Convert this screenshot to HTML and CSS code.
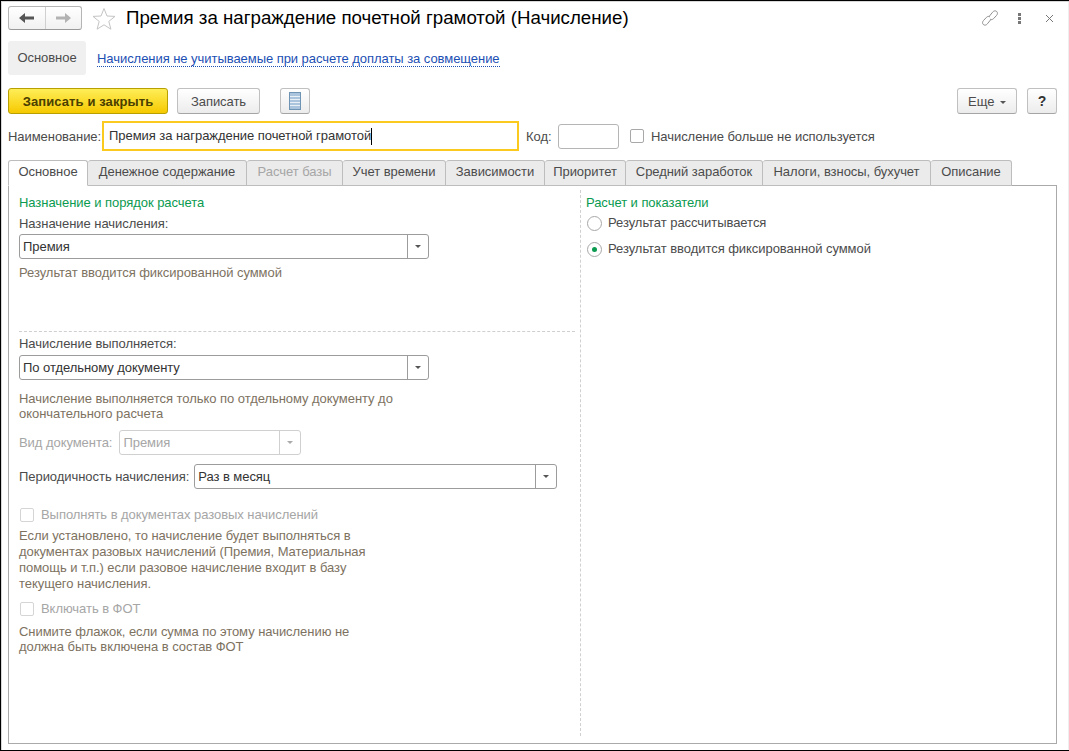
FILE: index.html
```html
<!DOCTYPE html>
<html lang="ru">
<head>
    <meta charset="UTF-8">
    <title>Премия за награждение почетной грамотой (Начисление)</title>
    <link rel="stylesheet" href="styles.css">
</head>
<body>
<div class="window">
    <!-- Заголовок формы -->
    <div class="title-bar">
        <div class="nav-group">
            <button class="nav-btn">
                <svg width="16" height="12" viewBox="0 0 16 12"><path d="M0 6 L6 1 V4.5 H15 V7.5 H6 V11 Z" fill="#555"/></svg>
            </button>
            <button class="nav-btn">
                <svg width="16" height="12" viewBox="0 0 16 12"><path d="M16 6 L10 1 V4.5 H1 V7.5 H10 V11 Z" fill="#b3b3b3"/></svg>
            </button>
        </div>
        <svg class="star" width="24" height="24" viewBox="0 0 24 24"><path d="M12 1.5 L15 9 L23 9.4 L16.8 14.4 L18.9 22.2 L12 17.8 L5.1 22.2 L7.2 14.4 L1 9.4 L9 9 Z" fill="none" stroke="#c4c4c4"/></svg>
        <h1 class="title">Премия за награждение почетной грамотой (Начисление)</h1>
        <div class="title-tools">
            <svg width="18" height="18" viewBox="0 0 18 18"><g fill="none" stroke="#8f8f8f" stroke-width="1"><path d="M8.2 7.4 L11.6 3.2 C12.9 1.6 14.6 1.5 15.7 2.5 C16.8 3.5 16.7 5.2 15.4 6.6 L12.6 9.6 C11.4 10.8 10 10.9 9 10"/><path d="M9.8 10.6 L6.4 14.8 C5.1 16.4 3.4 16.5 2.3 15.5 C1.2 14.5 1.3 12.8 2.6 11.4 L5.4 8.4 C6.6 7.2 8 7.1 9 8"/></g></svg>
            <span class="dots"><i></i><i></i><i></i></span>
            <svg width="9" height="9" viewBox="0 0 9 9"><path d="M1 1 L8 8 M8 1 L1 8" stroke="#777" stroke-width="1"/></svg>
        </div>
    </div>

    <!-- Панель навигации формы -->
    <div class="section-nav">
        <div class="section-current">Основное</div>
        <a class="section-link" href="#">Начисления не учитываемые при расчете доплаты за совмещение</a>
    </div>

    <!-- Командная панель -->
    <div class="command-bar">
        <button class="btn btn-primary">Записать и закрыть</button>
        <button class="btn btn-save">Записать</button>
        <button class="btn btn-icon">
            <svg width="12" height="18" viewBox="0 0 12 18">
                <rect x="0.5" y="0.5" width="11" height="17" fill="#a9c4dc" stroke="#6f93b3"/>
                <path d="M1 4.5 H11 M1 7.5 H11 M1 10.5 H11 M1 13.5 H11" stroke="#e8f0f6" stroke-width="1"/>
            </svg>
        </button>
        <div class="command-right">
            <button class="btn btn-more">Еще <span class="caret"></span></button>
            <button class="btn btn-help">?</button>
        </div>
    </div>

    <!-- Реквизиты -->
    <div class="name-row">
        <span class="name-label">Наименование:</span>
        <div class="name-input">Премия за награждение почетной грамотой<span class="cursor"></span></div>
        <span class="code-label">Код:</span>
        <div class="code-input"></div>
        <span class="checkbox"></span>
        <span class="check-text">Начисление больше не используется</span>
    </div>

    <!-- Вкладки -->
    <div class="tabs">
        <div class="tab tab-active t1">Основное</div>
        <div class="tab t2">Денежное содержание</div>
        <div class="tab tab-disabled t3">Расчет базы</div>
        <div class="tab t4">Учет времени</div>
        <div class="tab t5">Зависимости</div>
        <div class="tab t6">Приоритет</div>
        <div class="tab t7">Средний заработок</div>
        <div class="tab t8">Налоги, взносы, бухучет</div>
        <div class="tab t9">Описание</div>
    </div>

    <div class="tab-panel">
        <div class="left-col">
            <div class="group-title">Назначение и порядок расчета</div>
            <div class="field-label">Назначение начисления:</div>
            <div class="select select-wide"><span class="select-value">Премия</span><span class="select-arrow"><span class="caret"></span></span></div>
            <div class="hint hint-first">Результат вводится фиксированной суммой</div>

            <div class="separator"></div>

            <div class="field-label">Начисление выполняется:</div>
            <div class="select select-wide"><span class="select-value">По отдельному документу</span><span class="select-arrow"><span class="caret"></span></span></div>
            <div class="hint hint-doc">Начисление выполняется только по отдельному документу до<br>окончательного расчета</div>

            <div class="inline-field doc-field">
                <span class="inline-label disabled-text">Вид документа:</span>
                <div class="select select-doc select-disabled"><span class="select-value">Премия</span><span class="select-arrow"><span class="caret"></span></span></div>
            </div>
            <div class="inline-field period-field">
                <span class="inline-label">Периодичность начисления:</span>
                <div class="select select-period"><span class="select-value">Раз в месяц</span><span class="select-arrow"><span class="caret"></span></span></div>
            </div>

            <div class="check-row check-once"><span class="checkbox checkbox-disabled"></span><span class="disabled-text">Выполнять в документах разовых начислений</span></div>
            <div class="hint">Если установлено, то начисление будет выполняться в<br>документах разовых начислений (Премия, Материальная<br>помощь и т.п.) если разовое начисление входит в базу<br>текущего начисления.</div>
            <div class="check-row check-fot"><span class="checkbox checkbox-disabled"></span><span class="disabled-text">Включать в ФОТ</span></div>
            <div class="hint hint-fot">Снимите флажок, если сумма по этому начислению не<br>должна быть включена в состав ФОТ</div>
        </div>

        <div class="right-col">
            <div class="group-title">Расчет и показатели</div>
            <div class="radio-row radio-first"><span class="radio"></span>Результат рассчитывается</div>
            <div class="radio-row radio-second"><span class="radio radio-on"></span>Результат вводится фиксированной суммой</div>
        </div>
    </div>
</div>
</body>
</html>
```

FILE: styles.css
```css
* {
    box-sizing: border-box;
}
html, body {
    margin: 0;
    height: 100%;
}
body {
    font-family: "Liberation Sans", Arial, sans-serif;
    font-size: 13px;
    letter-spacing: -0.05px;
    color: #4b4b4b;
    background: #000;
    overflow: hidden;
}
button {
    font-family: inherit;
    font-size: inherit;
    letter-spacing: inherit;
    color: inherit;
    padding: 0;
}
.window {
    height: 750px;
    margin: 0 0 0 1px;
    border-top: 1px solid #000;
    background: #fff;
    box-shadow: inset 1px 1px 0 #d8d8d8, inset -1px 0 0 #eee;
    padding: 0 12px 0 7px;
    display: flex;
    flex-direction: column;
}

/* заголовок */
.title-bar {
    height: 34px;
    padding-top: 5px;
    display: flex;
    align-items: flex-start;
}
.nav-group {
    width: 74px;
    height: 24px;
    display: flex;
    border: 1px solid #b5b5b5;
    border-bottom-color: #999;
    border-radius: 3px;
    background: linear-gradient(#fff, #f1f1f1);
}
.nav-btn {
    flex: 1;
    border: 0;
    background: none;
    display: flex;
    align-items: center;
    justify-content: center;
}
.nav-btn + .nav-btn {
    border-left: 1px solid #d0d0d0;
}
.star {
    margin: 1px 0 0 10px;
}
.title {
    margin: 0 0 0 10px;
    font-size: 18.7px;
    font-weight: normal;
    letter-spacing: 0;
    line-height: 24px;
    color: #000;
}
.title-tools {
    margin-left: auto;
    margin-right: 3px;
    height: 24px;
    display: flex;
    align-items: center;
    gap: 14px;
}
.dots {
    display: flex;
    flex-direction: column;
    gap: 1px;
    margin: 0 10px 0 5px;
}
.dots i {
    display: block;
    width: 3px;
    height: 3px;
    background: #777;
}

/* панель навигации */
.section-nav {
    height: 34px;
    margin-top: 6px;
    display: flex;
    align-items: center;
}
.section-current {
    width: 78px;
    height: 34px;
    line-height: 34px;
    text-align: center;
    background: #f0f0f0;
    border-radius: 3px;
}
.section-link {
    margin-left: 11px;
    margin-top: 2px;
    color: #1c4fb4;
    text-decoration: none;
    border-bottom: 1px dotted #1c4fb4;
    line-height: 15px;
}

/* командная панель */
.command-bar {
    margin-top: 13px;
    height: 27px;
    display: flex;
}
.btn {
    height: 26px;
    border: 1px solid #c0c0c0;
    border-bottom-color: #a5a5a5;
    border-radius: 3px;
    background: linear-gradient(#fff, #ececec);
}
.btn-primary {
    width: 160px;
    font-weight: bold;
    letter-spacing: 0.1px;
    color: #4a4000;
    border-color: #b8a000;
    background: linear-gradient(#ffee58, #f6c900);
}
.btn-save {
    width: 83px;
    margin-left: 9px;
}
.btn-icon {
    width: 30px;
    margin-left: 20px;
    display: flex;
    align-items: center;
    justify-content: center;
}
.command-right {
    margin-left: auto;
    display: flex;
    gap: 10px;
}
.btn-more {
    width: 60px;
}
.btn-help {
    width: 30px;
    font-weight: bold;
    font-size: 14px;
    color: #333;
}
.caret {
    display: inline-block;
    width: 0;
    height: 0;
    margin-left: 2px;
    vertical-align: middle;
    border-left: 3px solid transparent;
    border-right: 3px solid transparent;
    border-top: 3px solid #555;
}

/* реквизиты */
.name-row {
    margin-top: 6px;
    height: 30px;
    display: flex;
    align-items: center;
}
.name-label {
    width: 94px;
}
.name-input {
    width: 417px;
    height: 30px;
    line-height: 26px;
    padding-left: 5px;
    border: 2px solid #fbca1e;
    color: #333;
    display: flex;
    align-items: center;
}
.cursor {
    display: inline-block;
    width: 1px;
    height: 17px;
    background: #000;
}
.code-label {
    margin-left: 7px;
    width: 32px;
}
.code-input {
    width: 61px;
    height: 25px;
    border: 1px solid #b5b5b5;
    border-radius: 3px;
}
.checkbox {
    flex: none;
    display: inline-block;
    width: 14px;
    height: 14px;
    border: 1px solid #a8a8a8;
    border-radius: 2px;
    background: #fff;
}
.name-row .checkbox {
    margin-left: 11px;
}
.check-text {
    margin-left: 7px;
}

/* вкладки */
.tabs {
    margin-top: 9px;
    height: 26px;
    display: flex;
    position: relative;
    z-index: 1;
}
.tab {
    height: 26px;
    line-height: 22px;
    text-align: center;
    background: #ebebeb;
    border: 1px solid #bdbdbd;
    border-left: 0;
    border-radius: 3px 3px 0 0;
}
.tab-active {
    background: #fff;
    border-left: 1px solid #bdbdbd;
    border-bottom-color: #fff;
}
.tab-disabled {
    color: #a6a6a6;
}
.t1 { width: 80px; }
.t2 { width: 159px; }
.t3 { width: 96px; }
.t4 { width: 103px; }
.t5 { width: 99px; }
.t6 { width: 81px; }
.t7 { width: 137px; }
.t8 { width: 168px; }
.t9 { width: 81px; }

.tab-panel {
    margin-top: -1px;
    height: 559px;
    border: 1px solid #aaa;
    display: flex;
    padding: 4px 0 7px 10px;
}
.left-col {
    width: 561px;
    flex: none;
}
.right-col {
    flex: 1;
    border-left: 1px dashed #d0d0d0;
    padding-left: 5px;
}
.group-title {
    margin-top: 5px;
    line-height: 15px;
    color: #0a9a50;
}
.field-label {
    line-height: 15px;
    margin-top: 6px;
}
.select {
    display: flex;
    height: 25px;
    border: 1px solid #9c9c9c;
    border-radius: 3px;
    color: #333;
    background: #fff;
}
.select-wide {
    width: 410px;
    margin-top: 3px;
}
.select-value {
    flex: 1;
    line-height: 23px;
    padding-left: 3px;
}
.select-arrow {
    width: 21px;
    border-left: 1px solid #9c9c9c;
    display: flex;
    align-items: center;
    justify-content: center;
}
.select-arrow .caret {
    margin: 0;
}
.select-disabled {
    border-color: #d0d0d0;
    color: #a6a6a6;
}
.select-disabled .select-arrow {
    border-left-color: #d0d0d0;
}
.select-disabled .caret {
    border-top-color: #aaa;
}
.select-doc {
    width: 182px;
}
.select-period {
    width: 363px;
}
.hint {
    color: #7d725f;
    line-height: 16px;
}
.hint-first {
    margin-top: 6px;
}
.separator {
    width: 556px;
    margin-top: 50px;
    border-top: 1px dashed #cfcfcf;
}
.separator + .field-label {
    margin-top: 4px;
}
.separator + .field-label + .select {
    margin-top: 4px;
}
.hint-doc {
    margin-top: 11px;
    line-height: 15px;
}
.inline-field {
    display: flex;
    align-items: center;
}
.inline-label {
    margin-right: 5px;
}
.doc-field .inline-label {
    margin-right: 7px;
}
.doc-field {
    margin-top: 9px;
}
.period-field {
    margin-top: 9px;
}
.disabled-text {
    color: #a6a6a6;
}
.check-row {
    display: flex;
    align-items: center;
    line-height: 16px;
    padding-left: 1px;
}
.check-row .checkbox {
    margin-right: 7px;
}
.checkbox-disabled {
    border-color: #d5d5d5;
}
.check-once {
    margin-top: 18px;
    margin-bottom: 5px;
}
.check-fot {
    margin-top: 9px;
}
.hint-fot {
    margin-top: 7px;
    line-height: 15px;
}
.radio-row {
    display: flex;
    align-items: center;
    line-height: 16px;
    padding-left: 1px;
}
.radio-first {
    margin-top: 5px;
}
.radio-second {
    margin-top: 10px;
}
.radio {
    width: 15px;
    height: 15px;
    margin-right: 6px;
    border: 1px solid #a8a8a8;
    border-radius: 50%;
    background: #fff;
    display: flex;
    align-items: center;
    justify-content: center;
}
.radio-on::after {
    content: "";
    width: 5px;
    height: 5px;
    border-radius: 50%;
    background: #0a9a50;
}
```
